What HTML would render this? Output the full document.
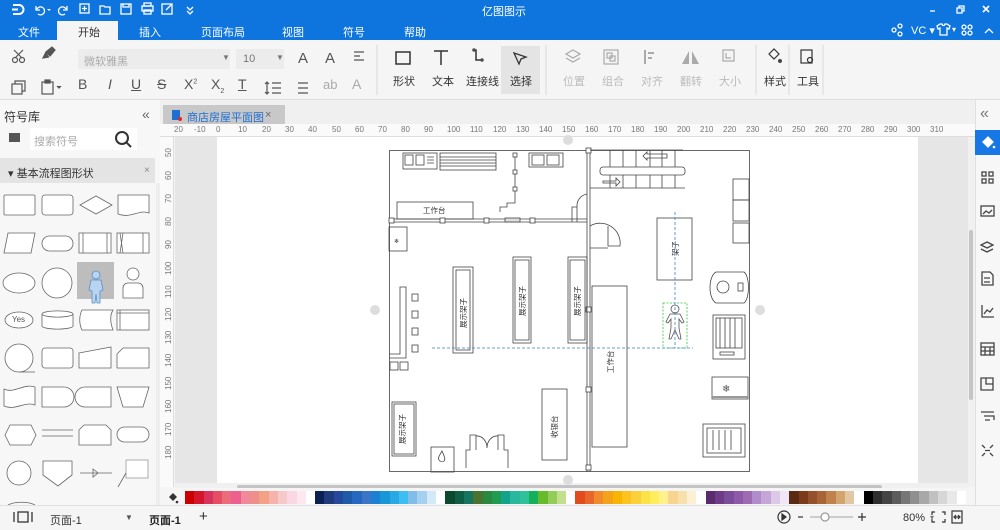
<!DOCTYPE html>
<html><head><meta charset="utf-8"><style>
*{margin:0;padding:0;box-sizing:border-box}
body{width:1000px;height:530px;overflow:hidden;background:#f5f5f5;font-family:"Liberation Sans","Noto Sans CJK SC",sans-serif;font-size:11px;color:#333;position:relative}
.a{position:absolute}
.t{position:absolute;white-space:nowrap}
.sw{display:flex;position:absolute;left:185px;top:491px;height:13px}
.sw i{display:block;width:9.3px;height:13px}
</style></head><body>
<!-- title bar -->
<div class="a" style="left:0;top:0;width:1000px;height:40px;background:#0e75de"></div>
<svg class="a" style="left:0;top:0" width="1000" height="40" fill="none" stroke="#fff" stroke-width="1.3">
<path d="M13 5h6a4.5 4.5 0 0 1 0 9h-6M12 9.5h6" stroke-width="2"/>
<path d="M36 6v4h4M37 9a4 4 0 1 1 1 5"/><path d="M47 9l2 2 2-2" fill="#fff" stroke="none"/>
<path d="M67 6v4h-4M66 9a4 4 0 1 0 -1 5"/>
<rect x="80" y="4" width="9" height="9"/><path d="M84.5 6v5M82 8.5h5"/>
<path d="M100 6h4l1 1h5v7h-10z"/>
<rect x="121" y="4" width="10" height="10"/><path d="M123 4v3h6V4"/>
<rect x="142" y="6" width="11" height="5"/><rect x="144" y="3" width="7" height="3"/><rect x="144" y="10" width="7" height="4"/>
<rect x="162" y="4" width="10" height="10"/><path d="M166 10l6-6"/>
<path d="M187 7l3 3 3-3M187 11l3 3 3-3"/>
<path d="M930 11h5"/>
<rect x="957" y="8" width="5" height="5"/><path d="M959 8V6h5v5h-2"/>
<path d="M983 6l6 6M989 6l-6 6" stroke-width="1.6"/>
<circle cx="894" cy="30" r="2"/><circle cx="900" cy="26" r="2"/><circle cx="900" cy="34" r="2"/>
<path d="M937 26l3-2h2a1.5 1.5 0 0 0 3 0h2l3 2-1 3-2-1v7h-7v-7l-2 1z"/>
<circle cx="964" cy="27" r="2"/><circle cx="970" cy="27" r="2"/><circle cx="964" cy="33" r="2"/><circle cx="970" cy="33" r="2"/>
<path d="M985 33l4-4 4 4"/>
</svg>
<div class="t" style="left:482px;top:3px;color:#fff;font-size:11px">亿图图示</div>
<div class="t" style="left:911px;top:24px;color:#fff;font-size:11px">VC ▾</div>
<div class="t" style="left:952px;top:25px;color:#fff;font-size:8px">▾</div>
<div class="a" style="left:57px;top:21px;width:61px;height:19px;background:#f5f5f5"></div>
<div class="t" style="left:18px;top:24px;color:#fff">文件</div>
<div class="t" style="left:78px;top:24px;color:#333">开始</div>
<div class="t" style="left:139px;top:24px;color:#fff">插入</div>
<div class="t" style="left:201px;top:24px;color:#fff">页面布局</div>
<div class="t" style="left:282px;top:24px;color:#fff">视图</div>
<div class="t" style="left:343px;top:24px;color:#fff">符号</div>
<div class="t" style="left:404px;top:24px;color:#fff">帮助</div>
<!-- toolbar -->
<div class="a" style="left:78px;top:49px;width:152px;height:20px;background:#ececec"></div>
<div class="t" style="left:84px;top:53px;color:#aaa">微软雅黑</div>
<div class="t" style="left:222px;top:53px;color:#777;font-size:8px">▼</div>
<div class="a" style="left:236px;top:49px;width:48px;height:20px;background:#ececec"></div>
<div class="t" style="left:243px;top:53px;color:#777">10</div>
<div class="t" style="left:276px;top:53px;color:#777;font-size:8px">▼</div>
<div class="t" style="left:298px;top:50px;font-size:15px;color:#555">A</div>
<div class="t" style="left:325px;top:50px;font-size:15px;color:#555">A</div>
<div class="t" style="left:78px;top:76px;font-size:14px;color:#555">B</div>
<div class="t" style="left:108px;top:76px;font-size:14px;color:#555;font-style:italic">I</div>
<div class="t" style="left:131px;top:76px;font-size:14px;color:#555;text-decoration:underline">U</div>
<div class="t" style="left:157px;top:76px;font-size:14px;color:#555;text-decoration:line-through">S</div>
<div class="t" style="left:184px;top:76px;font-size:14px;color:#555">X<sup style="font-size:7px">2</sup></div>
<div class="t" style="left:211px;top:76px;font-size:14px;color:#555">X<sub style="font-size:7px">2</sub></div>
<div class="t" style="left:238px;top:76px;font-size:14px;color:#555;text-decoration:underline">T</div>
<div class="t" style="left:323px;top:77px;font-size:13px;color:#aaa">ab</div>
<div class="t" style="left:352px;top:76px;font-size:14px;color:#aaa">A</div>
<svg class="a" style="left:0;top:40px" width="1000" height="60" fill="none" stroke="#555" stroke-width="1.2">
<circle cx="15" cy="20" r="2.5"/><circle cx="22" cy="20" r="2.5"/><path d="M14 10l8 8M23 10l-8 8"/>
<path d="M46 12l6-5 3 3-5 6zM46 12l-3 6 6-1" fill="#555"/>
<rect x="12" y="44" width="10" height="10"/><path d="M15 44v-3h10v10h-3"/>
<rect x="42" y="42" width="11" height="12"/><rect x="45" y="40" width="5" height="3" fill="#555"/><path d="M57 46l2 2 2-2" fill="#555"/>
<path d="M354 12h10M354 16h6M354 20h10"/>
<path d="M267 42v12M265 44l2-2 2 2M265 52l2 2 2-2M272 43h9M272 48h9M272 53h9"/>
<path d="M298 43h10M298 48h10M298 53h10"/>
<line x1="377" y1="5" x2="377" y2="55" stroke="#ddd"/>
<rect x="396" y="12" width="14" height="12" stroke="#333" stroke-width="1.5"/>
<path d="M434 11h14M441 11v14" stroke="#333" stroke-width="1.5"/>
<path d="M474 10h2v10h5" stroke="#333" stroke-width="1.5"/><circle cx="474" cy="10" r="1.2" fill="#333"/><circle cx="482" cy="20" r="1.2" fill="#333"/>
<line x1="546" y1="5" x2="546" y2="55" stroke="#ddd"/>
<path d="M573 10l7 4-7 4-7-4zM566 18l7 4 7-4" stroke="#aaa"/>
<rect x="604" y="10" width="14" height="14" stroke="#aaa"/><rect x="607" y="13" width="5" height="5" stroke="#aaa"/><rect x="610" y="16" width="5" height="5" stroke="#aaa"/>
<path d="M645 10v14M648 13h6M648 18h4" stroke="#aaa" stroke-width="2"/>
<path d="M689 11v13h-7zM692 11v13h7z" fill="#aaa" stroke="none"/>
<path d="M723 10h11v11h-11zM726 13v5h5" stroke="#aaa"/>
<line x1="756" y1="5" x2="756" y2="55" stroke="#ddd"/>
<path d="M769 14l5-5 5 5-5 5z" stroke="#333"/><circle cx="780" cy="21" r="1.5" fill="#333"/>
<line x1="789" y1="5" x2="789" y2="55" stroke="#ddd"/>
<rect x="801" y="10" width="11" height="13" stroke="#333"/><circle cx="810" cy="20" r="2.5" stroke="#333"/>
<line x1="823" y1="5" x2="823" y2="55" stroke="#ddd"/>
</svg>
<div class="a" style="left:501px;top:46px;width:39px;height:48px;background:#e4e4e4"></div>
<svg class="a" style="left:510px;top:49px" width="20" height="20" fill="none" stroke="#333" stroke-width="1.3"><path d="M4 4l12 4-5 2-2 5z"/></svg>
<div class="t" style="left:393px;top:73px;color:#333">形状</div>
<div class="t" style="left:432px;top:73px;color:#333">文本</div>
<div class="t" style="left:466px;top:73px;color:#333">连接线</div>
<div class="t" style="left:510px;top:73px;color:#333">选择</div>
<div class="t" style="left:563px;top:73px;color:#bbb">位置</div>
<div class="t" style="left:602px;top:73px;color:#bbb">组合</div>
<div class="t" style="left:641px;top:73px;color:#bbb">对齐</div>
<div class="t" style="left:680px;top:73px;color:#bbb">翻转</div>
<div class="t" style="left:719px;top:73px;color:#bbb">大小</div>
<div class="t" style="left:764px;top:73px;color:#333">样式</div>
<div class="t" style="left:797px;top:73px;color:#333">工具</div>
<div class="a" style="left:0;top:99px;width:1000px;height:1px;background:#ddd"></div>
<!-- left panel -->
<div class="a" style="left:0;top:100px;width:160px;height:405px;background:#f7f7f7"></div>
<div class="t" style="left:4px;top:108px;font-size:12px">符号库</div>
<div class="t" style="left:142px;top:106px;font-size:14px;color:#666">«</div>
<div class="a" style="left:30px;top:128px;width:107px;height:22px;background:#fff"></div>
<div class="a" style="left:9px;top:133px;width:11px;height:9px;background:#555"></div>
<div class="t" style="left:34px;top:133px;color:#aaa">搜索符号</div>
<svg class="a" style="left:113px;top:129px" width="22" height="22" fill="none" stroke="#333" stroke-width="2"><circle cx="9" cy="9" r="6"/><path d="M13 13l5 5"/></svg>
<div class="a" style="left:0;top:158px;width:155px;height:25px;background:#e4e4e4"></div>
<div class="t" style="left:8px;top:165px;font-size:11px">▾ 基本流程图形状</div>
<div class="t" style="left:144px;top:165px;color:#888;font-size:10px">×</div>
<div class="a" style="left:77px;top:262px;width:37px;height:37px;background:#bdbdbd"></div>
<svg class="a" style="left:0;top:185px" width="158" height="320" fill="#fff" stroke="#666" stroke-width="0.8">
<rect x="4" y="10" width="31" height="20" rx="1"/><rect x="42" y="10" width="31" height="20" rx="3"/><path d="M80 20l16-9 16 9-16 9z"/><path d="M118 10h31v18c-10-4-18 6-31 1z"/>
<path d="M8 48h27l-4 20H4z"/><rect x="42" y="51" width="31" height="15" rx="7.5"/><rect x="79" y="48" width="32" height="20"/><path d="M83 48v20M107 48v20" fill="none"/><rect x="117" y="48" width="32" height="20"/><path d="M120 48l3 20M123 48l-3 20M143 48v20" fill="none"/>
<ellipse cx="19" cy="98" rx="16" ry="10"/><circle cx="57" cy="98" r="15"/>
<circle cx="96" cy="90" r="4" fill="#b8d4f0" stroke="#5b8ec8"/><path d="M91 95h10l2 10-3 1v12h-3l-1-9-1 9h-3v-12l-3-1z" fill="#b8d4f0" stroke="#5b8ec8"/>
<circle cx="133" cy="89" r="6"/><path d="M123 113v-10a5 5 0 0 1 5-5h10a5 5 0 0 1 5 5v10z"/>
<ellipse cx="19" cy="135" rx="14" ry="8"/><path d="M42 129a15 3 0 0 1 31 0v12a15 3 0 0 1-31 0z"/><path d="M42 129a15 3 0 0 0 31 0" fill="none"/><path d="M82 125h31c-3 5-3 12 0 20H82c-3-6-3-14 0-20z"/><rect x="117" y="125" width="32" height="20"/><path d="M117 128h32M120 125v20" fill="none"/>
<circle cx="19" cy="173" r="14"/><path d="M19 187h16" fill="none"/><rect x="42" y="163" width="31" height="20" rx="3"/><path d="M79 168l32-6v21H79z"/><path d="M123 163h26v20h-32v-14z"/>
<path d="M4 204c10 5 20-6 31-2v18c-10-4-20 6-31 1z"/><path d="M42 202h22a10 10 0 0 1 0 20H42z"/><path d="M85 202h26v20H85a10 10 0 0 1 0-20z"/><path d="M117 202h32l-6 20h-20z"/>
<path d="M10 240h21l5 10-5 10H10l-5-10z"/><path d="M42 245h31M42 251h31" fill="none"/><path d="M84 240h22l5 5v15H79v-15z"/><rect x="117" y="242" width="32" height="15" rx="7.5"/>
<circle cx="19" cy="288" r="12"/><path d="M43 276h29v14l-14 11-15-11z"/><path d="M80 288h32M93 284l5 4-5 4z" fill="none"/><rect x="126" y="275" width="22" height="18" stroke="#999"/><path d="M126 288l-8 14" fill="none"/>
<path d="M8 320a16 6 0 0 1 27 0" fill="none"/>
</svg>
<div class="t" style="left:12px;top:315px;font-size:8px;color:#555">Yes</div>
<div class="a" style="left:156px;top:183px;width:4px;height:322px;background:#eee"></div>
<!-- doc tab -->
<div class="a" style="left:160px;top:100px;width:815px;height:24px;background:#f0f0f0"></div>
<div class="a" style="left:163px;top:105px;width:122px;height:19px;background:#c8c8c8"></div>
<div class="a" style="left:172px;top:110px;width:8px;height:10px;background:#1f6fd1"></div>
<div class="a" style="left:178px;top:117px;width:4px;height:4px;background:#e22;border-radius:2px"></div>
<div class="t" style="left:187px;top:109px;color:#1f6fd1;font-size:11px">商店房屋平面图</div>
<div class="t" style="left:265px;top:109px;color:#666">×</div>
<!-- rulers -->
<div class="a" style="left:160px;top:124px;width:815px;height:13px;background:#fafafa;border-bottom:1px solid #ddd"></div>
<div class="a" style="left:160px;top:137px;width:14px;height:350px;background:#fafafa;border-right:1px solid #ddd"></div>
<div class="t" style="left:174px;top:125px;font-size:8px;color:#777;letter-spacing:0">
<span style="position:absolute;left:0">20</span><span style="position:absolute;left:20px">-10</span><span style="position:absolute;left:42px">0</span>
<span style="position:absolute;left:64px">10</span><span style="position:absolute;left:88px">20</span><span style="position:absolute;left:111px">30</span><span style="position:absolute;left:134px">40</span><span style="position:absolute;left:158px">50</span><span style="position:absolute;left:181px">60</span><span style="position:absolute;left:204px">70</span><span style="position:absolute;left:227px">80</span><span style="position:absolute;left:250px">90</span><span style="position:absolute;left:273px">100</span><span style="position:absolute;left:296px">110</span><span style="position:absolute;left:319px">120</span><span style="position:absolute;left:342px">130</span><span style="position:absolute;left:365px">140</span><span style="position:absolute;left:388px">150</span><span style="position:absolute;left:411px">160</span><span style="position:absolute;left:434px">170</span><span style="position:absolute;left:457px">180</span><span style="position:absolute;left:480px">190</span><span style="position:absolute;left:503px">200</span><span style="position:absolute;left:526px">210</span><span style="position:absolute;left:549px">220</span><span style="position:absolute;left:572px">230</span><span style="position:absolute;left:595px">240</span><span style="position:absolute;left:618px">250</span><span style="position:absolute;left:641px">260</span><span style="position:absolute;left:664px">270</span><span style="position:absolute;left:687px">280</span><span style="position:absolute;left:710px">290</span><span style="position:absolute;left:733px">300</span><span style="position:absolute;left:756px">310</span></div>
<svg class="a" style="left:160px;top:137px" width="14" height="350" font-family="Liberation Sans" font-size="8" fill="#777">
<text transform="translate(11,20) rotate(-90)">50</text><text transform="translate(11,43) rotate(-90)">60</text><text transform="translate(11,66) rotate(-90)">70</text><text transform="translate(11,89) rotate(-90)">80</text><text transform="translate(11,112) rotate(-90)">90</text><text transform="translate(11,138) rotate(-90)">100</text><text transform="translate(11,161) rotate(-90)">110</text><text transform="translate(11,184) rotate(-90)">120</text><text transform="translate(11,207) rotate(-90)">130</text><text transform="translate(11,230) rotate(-90)">140</text><text transform="translate(11,253) rotate(-90)">150</text><text transform="translate(11,276) rotate(-90)">160</text><text transform="translate(11,299) rotate(-90)">170</text><text transform="translate(11,322) rotate(-90)">180</text>
</svg>
<!-- canvas -->
<div class="a" style="left:175px;top:137px;width:793px;height:350px;background:#e6e6e6"></div>
<div class="a" style="left:217px;top:137px;width:701px;height:350px;background:#fff"></div>
<div class="a" style="left:968px;top:137px;width:7px;height:350px;background:#f0f0f0"></div>
<div class="a" style="left:969px;top:230px;width:4px;height:170px;background:#c4c4c4;border-radius:2px"></div>
<div class="a" style="left:175px;top:483px;width:793px;height:5px;background:#f0f0f0"></div>
<div class="a" style="left:237px;top:485px;width:645px;height:4px;background:#c4c4c4;border-radius:2px"></div>
<svg class="a" style="left:0;top:0" width="1000" height="530" fill="none" stroke="#444" stroke-width="0.8" font-family="Liberation Sans,Noto Sans CJK SC,sans-serif" font-size="7.5">
<circle cx="375" cy="310" r="5" fill="#ddd" stroke="none"/><circle cx="760" cy="310" r="5" fill="#ddd" stroke="none"/><circle cx="568" cy="140" r="5" fill="#ddd" stroke="none"/><circle cx="568" cy="480" r="5" fill="#ddd" stroke="none"/>
<rect x="389.5" y="150.5" width="360" height="321"/>
<rect x="403" y="153" width="34" height="16"/><rect x="405" y="155" width="8" height="10"/><rect x="416" y="155" width="8" height="10"/><path d="M427 157h7M427 160h7M427 163h7"/>
<rect x="440" y="153" width="56" height="17"/><path d="M440 157h56M440 160h56M440 163h56M440 166h56"/>
<path d="M515 153v50h-8v4h-7v5" /><rect x="513" y="153" width="4" height="4" fill="#fff"/><rect x="513" y="170" width="4" height="4" fill="#fff"/><rect x="513" y="187" width="4" height="4" fill="#fff"/>
<rect x="529" y="153" width="34" height="14"/><rect x="532" y="155" width="12" height="10"/><rect x="547" y="155" width="12" height="10"/>
<path d="M587 150v322M590 150v322"/>
<rect x="586" y="148" width="5" height="5" fill="#fff"/><rect x="586" y="307" width="5" height="5" fill="#fff"/><rect x="586" y="387" width="5" height="5" fill="#fff"/><rect x="586" y="465" width="5" height="5" fill="#fff"/>
<path d="M590 150h93M590 188h95"/><path d="M610 150v38M623 150v38M636 150v38M650 150v38M662 150v38M675 150v38"/>
<rect x="600" y="167" width="85" height="8" rx="3" fill="#fff"/>
<path d="M647 158h20v-4h-20v-2l-4 4 4 4z"/><path d="M603 181h13v-3l4 4-4 4v-3h-13z"/>
<rect x="397" y="202" width="76" height="17"/><text x="423" y="213" fill="#333" stroke="none">工作台</text>
<path d="M389 219h198M389 222h198"/>
<rect x="389" y="218" width="5" height="5" fill="#fff"/><rect x="440" y="218" width="5" height="5" fill="#fff"/><rect x="484" y="218" width="5" height="5" fill="#fff"/><rect x="530" y="218" width="5" height="5" fill="#fff"/><rect x="505" y="218" width="15" height="4" fill="#ddd"/>
<path d="M572 222v-15h5v15M577 207a12 12 0 0 1 10-13" />
<path d="M590 226a20 20 0 0 1 30 20h-12v-20M590 248h18"/>
<rect x="389" y="227" width="18" height="24"/><text x="394" y="243" fill="#333" stroke="none" font-size="6">❄</text>
<rect x="453" y="267" width="20" height="86"/><rect x="456" y="270" width="14" height="80"/>
<rect x="513" y="257" width="18" height="86"/><rect x="515" y="260" width="14" height="80"/>
<rect x="568" y="257" width="19" height="86"/><rect x="570" y="260" width="15" height="80"/>
<g fill="#333" stroke="none"><text transform="translate(466,328) rotate(-90)">展示架子</text><text transform="translate(525,316) rotate(-90)">展示架子</text><text transform="translate(580,316) rotate(-90)">展示架子</text><text transform="translate(613,373) rotate(-90)">工作台</text><text transform="translate(678,256) rotate(-90)">架子</text><text transform="translate(405,444) rotate(-90)">展示架子</text><text transform="translate(557,438) rotate(-90)">收银台</text></g>
<rect x="592" y="286" width="35" height="161"/>
<rect x="657" y="218" width="35" height="62"/>
<path d="M389 354h11v-67h6v71h-17"/>
<rect x="412" y="294" width="6" height="7"/><rect x="412" y="311" width="6" height="7"/><rect x="412" y="328" width="6" height="7"/><rect x="412" y="345" width="6" height="7"/>
<rect x="390" y="362" width="8" height="8"/><rect x="400" y="362" width="8" height="8"/>
<rect x="392" y="402" width="24" height="54"/><rect x="394" y="404" width="20" height="50"/>
<rect x="542" y="389" width="25" height="71"/>
<rect x="431" y="447" width="23" height="25"/><path d="M442 451c-3 5-5 8-2 10a3 3 0 0 0 4 0c2-2 0-5-2-10z"/>
<path d="M466 468v-18h4v-15h6v15M508 468v-18h-4v-15h-6v15M476 436a10 12 0 0 1 11 12M498 436a10 12 0 0 0-11 12"/>
<rect x="733" y="179" width="16" height="21"/><rect x="733" y="200" width="16" height="21"/><rect x="733" y="223" width="16" height="20"/>
<path d="M716 272h28a6 16 0 0 1 0 31h-28a8 16 0 0 1 0-31z"/><circle cx="723" cy="287" r="6"/><rect x="738" y="283" width="5" height="8"/>
<rect x="713" y="315" width="32" height="44"/><rect x="716" y="318" width="26" height="30"/><path d="M720 318v30M725 318v30M730 318v30M735 318v30"/><rect x="720" y="352" width="14" height="3"/>
<rect x="712" y="377" width="36" height="22"/><path d="M712 397h36" stroke-width="2" stroke="#999"/><text x="722" y="392" fill="#555" stroke="none" font-size="10">❄</text>
<rect x="703" y="424" width="42" height="33"/><rect x="707" y="428" width="34" height="25"/><path d="M713 430v20M719 430v20M725 430v20M731 430v20"/>
<rect x="663" y="303" width="24" height="45" stroke="#3c3" stroke-dasharray="2 1.5"/>
<circle cx="675" cy="309" r="4" stroke="#555"/><path d="M670 314h10l4 8-2 1-3-4v9l2 11h-2l-4-9-4 9h-2l2-11v-9l-3 4-2-1z" stroke="#555"/>
<path d="M432 348h261M675 212v136" stroke="#3a7fd8" stroke-dasharray="3 2"/>
</svg>
<!-- right panel -->
<div class="a" style="left:975px;top:100px;width:25px;height:405px;background:#f7f7f7;border-left:1px solid #e0e0e0"></div>
<div class="t" style="left:980px;top:105px;font-size:16px;color:#777">«</div>
<div class="a" style="left:975px;top:130px;width:25px;height:25px;background:#1677e5"></div>
<svg class="a" style="left:975px;top:130px" width="25" height="380" fill="none" stroke="#444" stroke-width="1.3">
<path d="M8 12l5-5 5 5-5 5z" stroke="#fff" fill="#fff"/><circle cx="19" cy="17" r="1.3" fill="#fff" stroke="none"/>
<rect x="7" y="42" width="4" height="4"/><rect x="14" y="42" width="4" height="4"/><rect x="7" y="49" width="4" height="4"/><rect x="14" y="49" width="4" height="4"/>
<rect x="6" y="76" width="13" height="10"/><path d="M8 84l3-3 3 2 3-3"/>
<path d="M12 112l6 3-6 3-6-3zM6 119l6 3 6-3"/>
<path d="M7 142h8l3 3v10H7zM9 148h6M9 152h6"/>
<path d="M7 175v12h12M9 184l3-4 3 2 3-4"/>
<rect x="6" y="213" width="13" height="12"/><path d="M6 217h13M6 221h13M10 217v8M15 217v8"/>
<path d="M6 248h12v12H6zM11 248v6h7"/>
<path d="M6 282h13M9 286h10v4M10 290h5"/>
<path d="M7 315l3 3M18 315l-3 3M7 326l3-3M18 326l-3-3M10 320.5h5"/>
</svg>
<!-- palette -->
<div class="a" style="left:160px;top:488px;width:815px;height:17px;background:#f5f5f5"></div>
<svg class="a" style="left:166px;top:490px" width="14" height="14" fill="#333"><path d="M3 7l4-4 4 4-4 4z"/><circle cx="11" cy="12" r="1.3"/></svg>
<div class="sw">
<i style="background:#c00"></i><i style="background:#d3162b"></i><i style="background:#d8345b"></i><i style="background:#e54d66"></i><i style="background:#ec6b7a"></i><i style="background:#ec5f8f"></i><i style="background:#f08a9b"></i><i style="background:#ee8f8c"></i><i style="background:#f3a184"></i><i style="background:#f5b3ab"></i><i style="background:#f7c8c8"></i><i style="background:#fbd6e3"></i><i style="background:#fde8ef"></i><i style="background:#fff"></i>
<i style="background:#0c2153"></i><i style="background:#1f3b7d"></i><i style="background:#24489b"></i><i style="background:#1d5aa8"></i><i style="background:#2668c0"></i><i style="background:#3a75c8"></i><i style="background:#1d81d3"></i><i style="background:#1796d8"></i><i style="background:#28a8e5"></i><i style="background:#3bbef0"></i><i style="background:#80bde8"></i><i style="background:#a6d0ef"></i><i style="background:#d2e9f8"></i><i style="background:#fff"></i>
<i style="background:#0b4a2e"></i><i style="background:#0d5e45"></i><i style="background:#17745e"></i><i style="background:#4a7330"></i><i style="background:#298a3f"></i><i style="background:#1f9c52"></i><i style="background:#11a48a"></i><i style="background:#28b8a0"></i><i style="background:#2fc29a"></i><i style="background:#12b15a"></i><i style="background:#66bb2a"></i><i style="background:#93cc56"></i><i style="background:#c2e08c"></i><i style="background:#fff"></i>
<i style="background:#e24b1d"></i><i style="background:#e8652b"></i><i style="background:#f08a2a"></i><i style="background:#f4a11c"></i><i style="background:#f8b400"></i><i style="background:#fcc21d"></i><i style="background:#fcd03a"></i><i style="background:#fde247"></i><i style="background:#ffee5c"></i><i style="background:#fff28d"></i><i style="background:#f7d58e"></i><i style="background:#f8e0ad"></i><i style="background:#fcefd2"></i><i style="background:#fff"></i>
<i style="background:#5a2c6e"></i><i style="background:#6e3b86"></i><i style="background:#7b4c99"></i><i style="background:#8c5aa8"></i><i style="background:#9e6bb2"></i><i style="background:#b08ccc"></i><i style="background:#c6a6d8"></i><i style="background:#ddc8e8"></i><i style="background:#f0e6f5"></i>
<i style="background:#5b2a12"></i><i style="background:#7b3a1a"></i><i style="background:#93502b"></i><i style="background:#a86336"></i><i style="background:#c0824c"></i><i style="background:#d4a46f"></i><i style="background:#e3c7a5"></i><i style="background:#fff"></i>
<i style="background:#000"></i><i style="background:#2e2e2e"></i><i style="background:#444"></i><i style="background:#5c5c5c"></i><i style="background:#767676"></i><i style="background:#8f8f8f"></i><i style="background:#a8a8a8"></i><i style="background:#c0c0c0"></i><i style="background:#d6d6d6"></i><i style="background:#e8e8e8"></i><i style="background:#fff"></i>
</div>
<!-- status bar -->
<div class="a" style="left:0;top:505px;width:1000px;height:25px;background:#f5f5f5;border-top:1px solid #e0e0e0"></div>
<svg class="a" style="left:13px;top:511px" width="20" height="12" fill="none" stroke="#333" stroke-width="1.3"><path d="M1 1v10M19 1v10"/><rect x="5" y="1" width="10" height="10"/></svg>
<div class="t" style="left:50px;top:512px">页面-1</div>
<div class="t" style="left:125px;top:513px;font-size:8px;color:#555">▼</div>
<div class="t" style="left:149px;top:512px;font-weight:bold;color:#222">页面-1</div>
<div class="t" style="left:199px;top:508px;font-size:15px">+</div>
<svg class="a" style="left:776px;top:509px" width="190" height="16" fill="none" stroke="#333" stroke-width="1.2">
<circle cx="8" cy="8" r="6"/><path d="M6 5l4 3-4 3z" fill="#333"/>
<path d="M22 8h5"/><path d="M34 8h43" stroke="#ccc" stroke-width="2"/><circle cx="49" cy="8" r="4" fill="#fff" stroke="#999"/>
<path d="M82 8h8M86 4v8"/>
<path d="M159 3h-3v3M166 3h3v3M159 13h-3v-3M166 13h3v-3"/>
<rect x="176" y="2" width="10" height="12"/><path d="M178 8h6M180 6l-2 2 2 2M182 6l2 2-2 2"/>
</svg>
<div class="t" style="left:903px;top:512px;color:#333">80%</div>
<div class="t" style="left:930px;top:513px;font-size:8px;color:#777">▾</div>
</body></html>
